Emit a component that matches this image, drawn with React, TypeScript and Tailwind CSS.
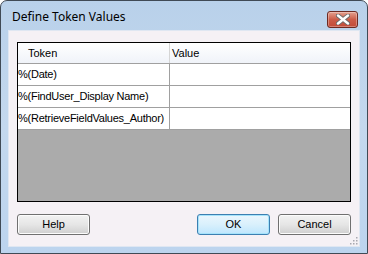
import React from "react"

const rows = ["%(Date)", "%(FindUser_Display Name)", "%(RetrieveFieldValues_Author)"]

function CloseButton() {
  return (
    <div className="mt-[5px] flex h-[17px] w-[31px] items-center justify-center rounded-[3px] border border-[#6d2a22] bg-gradient-to-b from-[#e3a08f] via-[#cc5c48] to-[#c24b38] shadow-[inset_0_0_0_1px_rgba(255,255,255,0.3)]">
      <svg width="14" height="11" viewBox="0 0 14 11">
        <path d="M2 1.5 L12 9.5 M12 1.5 L2 9.5" stroke="#6b6b6b" strokeWidth="4.2" strokeLinecap="round" />
        <path d="M2 1.5 L12 9.5 M12 1.5 L2 9.5" stroke="#ffffff" strokeWidth="2.4" strokeLinecap="round" />
      </svg>
    </div>
  )
}

function DlgButton({ label, primary }: { label: string; primary?: boolean }) {
  return (
    <div
      className={
        "flex h-[21px] w-[73px] items-center justify-center rounded-[3px] border text-[11px] text-black " +
        (primary
          ? "border-[#3c7fb1] bg-gradient-to-b from-[#eaf6fd] via-[#d9f0fc] to-[#bee6fd] shadow-[inset_0_0_0_1px_#a5e3fb]"
          : "border-[#707070] bg-gradient-to-b from-[#f2f2f2] via-[#e6e6e6] to-[#cfcfcf] shadow-[inset_0_0_0_1px_#fcfcfc]")
      }
    >
      {label}
    </div>
  )
}

export default function App() {
  return (
    <div className="h-[254px] w-[368px] bg-white" style={{ fontFamily: "'Liberation Sans', Arial, sans-serif" }}>
      {/* window frame */}
      <div className="flex h-[254px] w-[368px] flex-col rounded-t-[7px] border border-[#404a55] bg-gradient-to-b from-[#b9d1ea] via-[#c4d8ee] to-[#bcd4ee] px-[7px] pb-[6px]">
        {/* title bar */}
        <div className="flex h-[29px] shrink-0 items-center justify-between pl-[4px] pr-[2px] pt-[3px]">
          <span className="text-[12px] text-black" style={{ fontFamily: "'Noto Sans', 'Open Sans', sans-serif" }}>
            Define Token Values
          </span>
          <CloseButton />
        </div>

        {/* client area */}
        <div className="relative flex flex-1 flex-col border border-[#dfe7f2] bg-[#f5f1f5] px-[8px] pt-[11px]">
          <div className="flex h-[160px] w-[334px] flex-col border border-black bg-[#ababab]">
            {/* header */}
            <div className="flex h-[21px] border-b border-[#a0a0a0] bg-gradient-to-b from-white to-[#f0f3f9] text-[11px] text-black">
              <div className="flex w-[152px] items-center border-r border-[#d5d5d5] pl-[10px]">Token</div>
              <div className="flex flex-1 items-center pl-[2px]">Value</div>
            </div>
            {rows.map((r) => (
              <div key={r} className="flex h-[22px] border-b border-[#a0a0a0] bg-white text-[11px] tracking-[-0.25px] text-black">
                <div className="flex w-[152px] items-center overflow-hidden whitespace-nowrap border-r border-[#a0a0a0]">{r}</div>
                <div className="flex-1" />
              </div>
            ))}
          </div>

          <div className="mt-[12px] flex items-center">
            <DlgButton label="Help" />
            <div className="flex-1" />
            <DlgButton label="OK" primary />
            <div className="w-[8px]" />
            <DlgButton label="Cancel" />
          </div>

          {/* resize grip */}
          <svg className="absolute bottom-[1px] right-[1px]" width="10" height="10" viewBox="0 0 10 10">
            {[
              [8, 2], [8, 5], [5, 5], [8, 8], [5, 8], [2, 8],
            ].map(([x, y]) => (
              <rect key={`${x}-${y}`} x={x} y={y} width="1.5" height="1.5" fill="#a8a8b0" />
            ))}
          </svg>
        </div>
      </div>
    </div>
  )
}
